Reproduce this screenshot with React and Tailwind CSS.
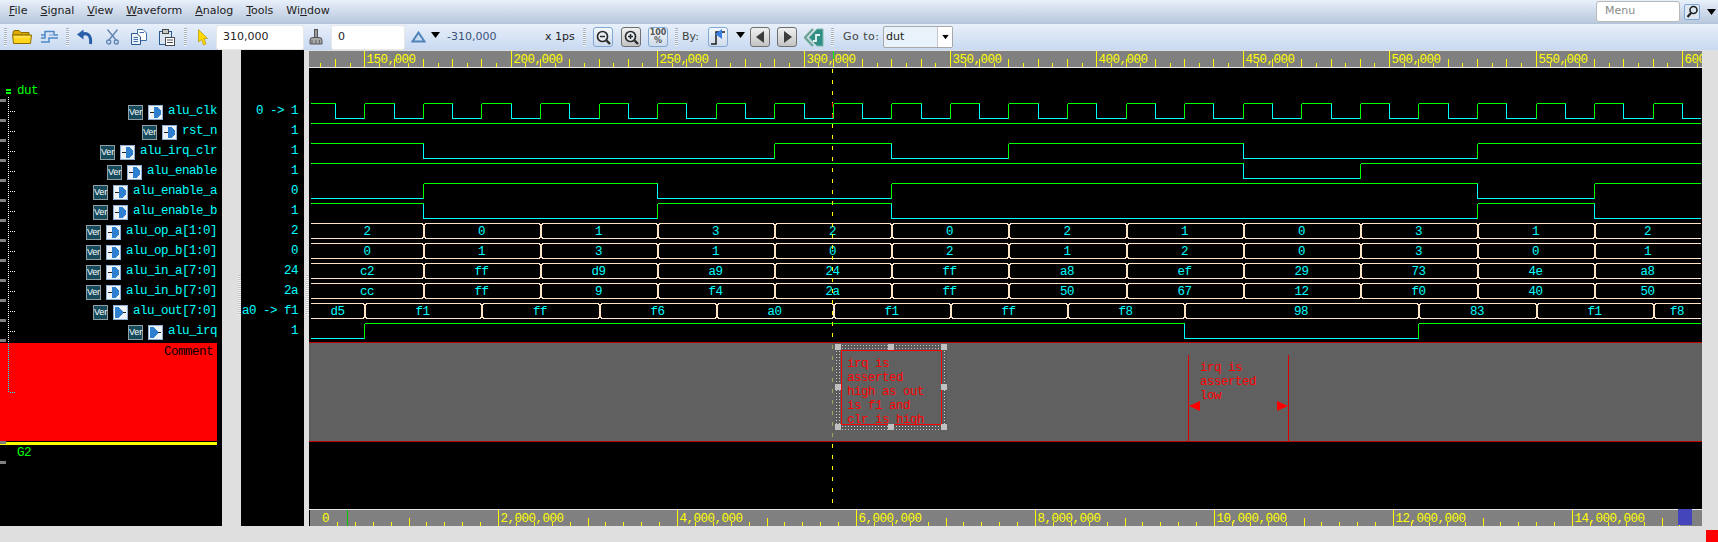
import React from "react";

const X = (t) => Math.round(364.3 + (t - 150000) * 0.002928);
const HI = "#00ff00";
const LO = "#00ffff";
const BUS = "#ffe4c8";

const signals = [
  { name: "alu_clk", value: "0 -> 1" },
  { name: "rst_n", value: "1" },
  { name: "alu_irq_clr", value: "1" },
  { name: "alu_enable", value: "1" },
  { name: "alu_enable_a", value: "0" },
  { name: "alu_enable_b", value: "1" },
  { name: "alu_op_a[1:0]", value: "2" },
  { name: "alu_op_b[1:0]", value: "0" },
  { name: "alu_in_a[7:0]", value: "24" },
  { name: "alu_in_b[7:0]", value: "2a" },
  { name: "alu_out[7:0]", value: "a0 -> f1", out: true },
  { name: "alu_irq", value: "1", out: true },
];

const clkEdges = [];
for (let t = 140000; t <= 600000; t += 10000) clkEdges.push(t);

// first level + times where it toggles
const digital = [
  { row: 0, start: 1, edges: clkEdges },
  { row: 1, start: 1, edges: [] },
  { row: 2, start: 1, edges: [170000, 290000, 330000, 370000, 450000, 530000] },
  { row: 3, start: 1, edges: [450000, 490000] },
  { row: 4, start: 0, edges: [170000, 250000, 330000, 530000, 570000] },
  { row: 5, start: 1, edges: [170000, 250000, 330000, 530000, 570000] },
  { row: 11, start: 0, edges: [150000, 430000, 510000] },
];

const inTimes = [170000, 210000, 250000, 290000, 330000, 370000, 410000, 450000, 490000, 530000, 570000];
const buses = [
  { row: 6, times: inTimes, vals: ["2", "0", "1", "3", "2", "0", "2", "1", "0", "3", "1", "2"] },
  { row: 7, times: inTimes, vals: ["0", "1", "3", "1", "0", "2", "1", "2", "0", "3", "0", "1"] },
  { row: 8, times: inTimes, vals: ["c2", "ff", "d9", "a9", "24", "ff", "a8", "ef", "29", "73", "4e", "a8"] },
  { row: 9, times: inTimes, vals: ["cc", "ff", "9", "f4", "2a", "ff", "50", "67", "12", "f0", "40", "50"] },
  {
    row: 10,
    times: [150000, 190000, 230000, 270000, 310000, 350000, 390000, 430000, 510000, 550000, 590000],
    vals: ["d5", "f1", "ff", "f6", "a0", "f1", "ff", "f8", "98", "83", "f1", "f8"],
  },
];

const LEFT = 311;
const RIGHT = 1701;

function DigitalWave({ row, start, edges }) {
  const hi = 103.5 + row * 20;
  const lo = hi + 15;
  const parts = [];
  let level = start;
  let from = LEFT;
  edges.forEach((t) => {
    const x = X(t) + 0.5;
    parts.push(<path key={t} d={`M${from} ${level ? hi : lo}H${x}`} stroke={level ? HI : LO} />);
    level = level ? 0 : 1;
    parts.push(<path key={t + "v"} d={`M${x} ${hi}V${lo}`} stroke={level ? HI : LO} />);
    from = x;
  });
  parts.push(<path key="end" d={`M${from} ${level ? hi : lo}H${RIGHT}`} stroke={level ? HI : LO} />);
  return <g fill="none">{parts}</g>;
}

function BusWave({ row, times, vals }) {
  const top = 103.5 + row * 20;
  const bot = top + 15;
  const cuts = [LEFT, ...times.map(X), RIGHT];
  return (
    <g>
      {vals.map((v, i) => {
        const a = cuts[i];
        const b = cuts[i + 1];
        const l = i === 0 ? `M${a} ${top}` : `M${a + 2.5} ${top}`;
        const rightEdge = i === vals.length - 1 ? `H${b}M${b} ${bot}` : `H${b - 0.5}L${b + 0.5} ${top + 2}V${bot - 2}L${b - 0.5} ${bot}`;
        const leftEdge = i === 0 ? `H${a}` : `H${a + 2.5}L${a + 1.5} ${bot - 2}V${top + 2}L${a + 2.5} ${top}`;
        return (
          <g key={i}>
            <path d={`${l}${rightEdge}${leftEdge}`} fill="none" stroke={BUS} />
            <text x={(a + b) / 2} y={top + 11} textAnchor="middle" fill={LO}>
              {v}
            </text>
          </g>
        );
      })}
    </g>
  );
}

function TopRuler() {
  const ticks = [];
  for (let t = 135000; t <= 605000; t += 5000) ticks.push(t);
  return (
    <svg width="1393" height="18" viewBox="309 50 1393 18" className="block shrink-0 text-[12.5px] tracking-[-0.5px]" shapeRendering="crispEdges">
      <rect x="309" y="50" width="1393" height="18" fill="#808080" />
      <rect x="309" y="50" width="1393" height="1" fill="#dfdfdf" />
      <rect x="309" y="67" width="1393" height="1" fill="#e6e6e6" />
      {ticks.map((t) => {
        const major = t % 50000 === 0;
        const tall = t % 10000 === 0;
        const x = X(t) + 0.5;
        return (
          <g key={t}>
            <path d={`M${x} ${major ? 51 : tall ? 59 : 63}V67`} stroke="#ffff00" />
            {major && (
              <text x={x + 2} y="63" fill="#ffff00">
                {t.toLocaleString("en-US")}
              </text>
            )}
          </g>
        );
      })}
      <path d={`M${X(310000) + 0.5} 51V59`} stroke="#00ff00" />
    </svg>
  );
}

function BottomRuler() {
  const ticks = [];
  for (let i = 1; i <= 76; i++) ticks.push(i);
  return (
    <svg width="1393" height="17" viewBox="309 509 1393 17" className="block shrink-0 text-[12.5px] tracking-[-0.5px]" shapeRendering="crispEdges">
      <rect x="310" y="510" width="1392" height="16" fill="#808080" />
      <rect x="309" y="509" width="1393" height="1" fill="#e6e6e6" />
      <text x="322" y="522" fill="#ffff00">0</text>
      {ticks.map((i) => {
        const x = Math.round(319 + i * 17.9) + 0.5;
        const major = i % 10 === 0;
        const tall = i % 5 === 0;
        return (
          <g key={i}>
            <path d={`M${x} ${major ? 510 : tall ? 518 : 522}V526`} stroke="#ffff00" />
            {major && (
              <text x={x + 2} y="522" fill="#ffff00">
                {(i * 200000).toLocaleString("en-US")}
              </text>
            )}
          </g>
        );
      })}
      <path d="M347.5 510V526" stroke="#00c800" />
      <rect x="1678" y="509" width="14" height="16" fill="#4444bb" />
    </svg>
  );
}

function Grip({ className = "" }) {
  return <div className={`h-[18px] w-[3px] shrink-0 bg-[repeating-linear-gradient(180deg,#a8b0ba_0px,#a8b0ba_1px,#f4f7fb_1px,#f4f7fb_2px)] ${className}`} />;
}

function Caret({ className = "" }) {
  return (
    <svg width="9" height="6" viewBox="0 0 9 6" className={`shrink-0 ${className}`}>
      <path d="M0 0H9L4.500 6Z" fill="#000" />
    </svg>
  );
}

function Magnifier({ plus }) {
  return (
    <svg width="15" height="15" viewBox="0 0 15 15" fill="none">
      <circle cx="6.500" cy="6.500" r="5" stroke="#2b2b2b" strokeWidth="1.700" fill="#e8eef4" />
      <path d="M10.500 10.500L14 14" stroke="#2b2b2b" strokeWidth="2.400" />
      <path d="M4 6.500H9" stroke="#2b2b2b" strokeWidth="1.500" />
      {plus && <path d="M6.500 4V9" stroke="#2b2b2b" strokeWidth="1.500" />}
    </svg>
  );
}

function IconButton({ children, className = "", blue = true }) {
  return (
    <div
      className={`flex h-[20px] w-[20px] shrink-0 items-center justify-center rounded-[3px] border ${
        blue ? "border-[#7fa8d4] bg-gradient-to-b from-[#f4f8fc] to-[#cfdcea]" : "border-[#6f6f6f] bg-gradient-to-b from-[#f0f0f0] to-[#c4c4c4]"
      } ${className}`}
    >
      {children}
    </div>
  );
}

function VerBadge() {
  return (
    <div className="flex h-[15px] w-[15px] shrink-0 items-center justify-center border border-[#8f9fa3] bg-[#174b5c] font-['Liberation_Sans',sans-serif] text-[9px] tracking-[-0.2px] leading-none text-white">
      Ver
    </div>
  );
}

function GateIcon({ out }) {
  return (
    <svg width="15" height="15" viewBox="0 0 15 15" className="shrink-0" shapeRendering="crispEdges">
      <rect x="0.500" y="0.500" width="14" height="14" fill="#eef3f8" stroke="#8fb0d4" />
      {out ? (
        <>
          <path d="M2 2H5L10 6V9L5 13H2Z" fill="#2f7fd0" />
          <path d="M10 7.500H13" stroke="#222" />
        </>
      ) : (
        <>
          <path d="M6 2H9L13 6V9L9 13H6Z" fill="#2f7fd0" />
          <path d="M2 7.500H6" stroke="#222" />
        </>
      )}
    </svg>
  );
}

function MenuBar() {
  return (
    <div className="flex h-[24px] items-center border-b border-[#b3c4da] bg-gradient-to-b from-[#e8f0fb] to-[#b9c8dc] pl-[9px] text-[11px] text-[#222]">
      <div className="flex gap-[13px]">
        <span><span className="underline">F</span>ile</span>
        <span><span className="underline">S</span>ignal</span>
        <span><span className="underline">V</span>iew</span>
        <span><span className="underline">W</span>aveform</span>
        <span><span className="underline">A</span>nalog</span>
        <span><span className="underline">T</span>ools</span>
        <span>Wi<span className="underline">n</span>dow</span>
      </div>
      <div className="ml-auto flex items-center pr-[2px]">
        <div className="flex h-[21px] w-[84px] items-center rounded-[3px] border border-[#b8b8b8] bg-white pl-[8px] text-[11px] text-[#8a8a8a]">Menu</div>
        <div className="ml-[4px] flex h-[16px] w-[16px] items-center justify-center rounded-[2px] border border-[#7fa8d4] bg-[#dce8f4]">
          <svg width="13" height="13" viewBox="0 0 13 13" fill="none">
            <circle cx="7.500" cy="5" r="3.500" stroke="#222" strokeWidth="1.600" />
            <path d="M5 8L1.500 12" stroke="#222" strokeWidth="2.200" />
          </svg>
        </div>
        <Caret className="ml-[7px]" />
      </div>
    </div>
  );
}

function ToolBar() {
  return (
    <div className="flex h-[26px] items-center whitespace-nowrap bg-gradient-to-b from-[#e8f0fa] to-[#c8d9f1] text-[11px]">
      <Grip className="ml-[4px]" />
      <svg width="20" height="16" viewBox="0 0 20 16" className="ml-[5px] shrink-0">
        <path d="M1 3.500Q1 1.500 3 1.500H7L9 3.500H17V6H1Z" fill="#e0aa00" stroke="#8a6c00" />
        <path d="M0.500 6H19.500L18.500 14.500H1.500Z" fill="#ffd51e" stroke="#8a6c00" />
        <path d="M2 8H18" stroke="#ffec80" />
      </svg>
      <svg width="17" height="14" viewBox="0 0 17 14" fill="none" className="ml-[9px] shrink-0" stroke="#4f88c6">
        <path d="M0 8H4V1.500H13V5H17" strokeWidth="1.500" />
        <path d="M0 5H4M0 12H8V8H13V8H17" strokeWidth="1.500" />
        <path d="M8 5H13" strokeWidth="1.500" stroke="#8fb4da" />
      </svg>
      <Grip className="ml-[8px]" />
      <svg width="16" height="16" viewBox="0 0 16 16" fill="none" className="ml-[8px] shrink-0">
        <path d="M5 5.500C10 3 14.500 6 13.500 15" stroke="#2a5fa8" strokeWidth="3" />
        <path d="M0 5.500L6.500 0.500V10.500Z" fill="#2a5fa8" />
      </svg>
      <svg width="13" height="16" viewBox="0 0 13 16" fill="none" className="ml-[13px] shrink-0" stroke="#5f82b0">
        <path d="M1.500 0.500L10 11M11.500 0.500L3 11" strokeWidth="1.300" />
        <circle cx="2.700" cy="13" r="2" strokeWidth="1.300" />
        <circle cx="10.300" cy="13" r="2" strokeWidth="1.300" />
      </svg>
      <svg width="16" height="16" viewBox="0 0 16 16" className="ml-[12px] shrink-0">
        <path d="M6.500 0.500H12L15.500 4V11.500H6.500Z" fill="#fff" stroke="#3f70a8" />
        <path d="M0.500 4.500H6L9.500 8V15.500H0.500Z" fill="#eaf1f9" stroke="#2a5a94" />
        <path d="M2.500 8.500H7M2.500 10.500H7M2.500 12.500H7M8.500 3.500H13" stroke="#3f70a8" />
      </svg>
      <svg width="16" height="17" viewBox="0 0 16 17" className="ml-[12px] shrink-0">
        <rect x="0.500" y="2.500" width="12" height="13" fill="#dbe6f2" stroke="#2a5a94" />
        <rect x="3.500" y="0.500" width="6" height="4" fill="#c8c8c8" stroke="#444" />
        <rect x="6.500" y="8.500" width="9" height="8" fill="#fff" stroke="#4a4a4a" />
        <path d="M8 11H14M8 13.500H14" stroke="#555" />
      </svg>
      <Grip className="ml-[9px]" />
      <svg width="10" height="17" viewBox="0 0 10 17" className="ml-[11px] shrink-0">
        <path d="M0.500 0.500L9.500 9.500H6L8 15L5.500 16L3.500 10.500L0.500 13Z" fill="#ffd800" stroke="#b89a00" strokeWidth="0.700" />
      </svg>
      <div className="ml-[8px] flex h-[25px] w-[88px] shrink-0 items-center rounded-[3px] border border-[#e8e8e8] bg-white pl-[6px] text-[11px] text-[#222]">310,000</div>
      <svg width="14" height="17" viewBox="0 0 14 17" className="ml-[5px] shrink-0">
        <rect x="5.500" y="0.500" width="3" height="8" fill="#9a9a9a" stroke="#555" />
        <path d="M1 15V11Q1 8.500 4 8.500H10Q13 8.500 13 11V15Z" fill="#a8a8a8" stroke="#555" />
        <path d="M3 11V15M7 11V15M10.500 11V15" stroke="#666" />
      </svg>
      <div className="ml-[8px] flex h-[25px] w-[74px] shrink-0 items-center rounded-[3px] border border-[#e8e8e8] bg-white pl-[6px] text-[11px] text-[#222]">0</div>
      <svg width="15" height="12" viewBox="0 0 15 12" fill="none" className="ml-[6px] shrink-0">
        <path d="M7.500 1.500L13.500 10.500H1.500Z" stroke="#4f82bb" strokeWidth="2" fill="#c9dbee" />
      </svg>
      <Caret className="ml-[5px] -translate-y-[2px]" />
      <span className="ml-[7px] w-[98px] shrink-0 text-[#3a5278]">-310,000</span>
      <span className="w-[32px] shrink-0 text-[#222]">x 1ps</span>
      <Grip className="ml-[6px]" />
      <IconButton className="ml-[7px]"><Magnifier /></IconButton>
      <IconButton className="ml-[8px]" blue={false}><Magnifier plus /></IconButton>
      <IconButton className="ml-[7px] flex-col text-[8px] font-bold leading-[8px] text-[#555]">
        <span>100</span>
        <span>%</span>
      </IconButton>
      <Grip className="ml-[7px]" />
      <span className="ml-[4px] w-[20px] shrink-0 text-[#444]">By:</span>
      <IconButton className="ml-[6px]">
        <svg width="16" height="16" viewBox="0 0 16 16" fill="none">
          <path d="M1 15H6V3H15" stroke="#1c1c1c" strokeWidth="1.500" />
          <path d="M12 1V11L5 6Z" fill="#3b7fe0" transform="translate(0 -1)" />
        </svg>
      </IconButton>
      <Caret className="ml-[8px] -translate-y-[2px]" />
      <IconButton className="ml-[5px]" blue={false}>
        <svg width="9" height="12" viewBox="0 0 9 12"><path d="M8 0V12L0 6Z" fill="#3c3c3c" /></svg>
      </IconButton>
      <IconButton className="ml-[7px]" blue={false}>
        <svg width="9" height="12" viewBox="0 0 9 12"><path d="M1 0V12L9 6Z" fill="#3c3c3c" /></svg>
      </IconButton>
      <svg width="20" height="19" viewBox="0 0 20 19" fill="none" className="ml-[7px] shrink-0">
        <path d="M9 1L1 9.500L9 18" stroke="#6fa596" strokeWidth="2.500" />
        <path d="M13 1L5 9.500L13 18H19V1Z" fill="#2f8f86" stroke="#7fb8a8" />
        <path d="M9 13H12V7H16" stroke="#e6f4f0" strokeWidth="1.800" />
      </svg>
      <Grip className="ml-[7px]" />
      <span className="ml-[9px] w-[34px] shrink-0 tracking-[0.5px] text-[#444]">Go to:</span>
      <div className="ml-[6px] flex h-[22px] w-[70px] shrink-0 items-center rounded-[2px] border border-[#a8a8a8] bg-[#e9f1fa] pl-[2px] text-[11px] text-[#222]">
        dut
        <div className="ml-auto flex h-full w-[15px] items-center justify-center border-l border-[#c8c8c8] bg-white">
          <Caret className="scale-75" />
        </div>
      </div>
    </div>
  );
}

function GripTick({ className = "" }) {
  return <div className={`absolute left-0 h-[3px] w-[6px] bg-[#808080] ${className}`} />;
}

function TreeLines() {
  return (
    <svg width="16" height="345" viewBox="0 50 16 345" className="absolute left-0 top-0" fill="none" shapeRendering="crispEdges">
      <path d="M8.500 97V343" stroke="#fff" strokeDasharray="1 1" />
      <path d="M8.500 343V393" stroke="#00ffff" strokeDasharray="1 1" />
      {signals.map((s, i) => (
        <path key={s.name} d={`M10 ${111.5 + i * 20}H15`} stroke="#fff" strokeDasharray="1 1" />
      ))}
      <path d="M10 392.500H15" stroke="#00ffff" strokeDasharray="1 1" />
    </svg>
  );
}

function SignalPane() {
  return (
    <div className="relative w-[222px] shrink-0 bg-black pr-[5px] pt-[32px]">
      <div className="relative flex h-[20px] items-center pb-[2px] pl-[6px] text-[#00ff00]">
        <div className="mr-[6px] h-[5px] w-[5px] border-y-2 border-[#00ff00]" />
        dut
        <GripTick className="bottom-0" />
      </div>
      {signals.map((s) => (
        <div key={s.name} className="relative flex h-[20px] items-center justify-end gap-[5px] text-[#00ffff]">
          <VerBadge />
          <GateIcon out={s.out} />
          <span className="-translate-y-[1px]">{s.name}</span>
          <GripTick className="bottom-0" />
        </div>
      ))}
      <div className="mt-[1px] h-[98px] bg-[#ff0000] pr-[4px] pt-[1px] text-right leading-[16px] text-black">Comment</div>
      <div className="relative mt-[1px] h-[3px] bg-[#ffff00]">
        <GripTick className="-top-[1px] bg-[#7a86b4]" />
      </div>
      <div className="relative flex h-[16px] items-center pl-[17px] text-[#00ff00]">
        G2
        <GripTick className="-bottom-[3px]" />
      </div>
      <TreeLines />
    </div>
  );
}

function ValuePane() {
  return (
    <div className="w-[63px] shrink-0 whitespace-pre bg-black pr-[6px] pt-[52px] text-right text-[#00ffff]">
      {signals.map((s) => (
        <div key={s.name} className="flex h-[20px] items-center justify-end pb-[2px]">{s.value}</div>
      ))}
    </div>
  );
}

function Handle() {
  return <div className="mt-[225px] h-[40px] w-[3px] bg-[repeating-linear-gradient(180deg,#c4c4c4_0px,#c4c4c4_1px,#f2f2f2_1px,#f2f2f2_2px)]" />;
}

function CommentPanel() {
  return (
    <div className="relative h-[100px] shrink-0 overflow-hidden border-y border-[#c00000] bg-[#606060] leading-[14px] text-[#ff0000]">
      {/* selected note: dotted frame, grab handles, red box */}
      <div className="absolute left-[526px] top-[1px] h-[86px] w-[112px] bg-[radial-gradient(#c8c8c8_0.7px,#5a5a5a_1px)] bg-[length:3px_3px]" />
      <div className="absolute left-[532px] top-[7px] h-[75px] w-[101px] overflow-hidden border border-[#ff0000] bg-[#606060] pl-[5px] pt-[6px]">
        irq is<br />asserted<br />high as out<br />is f1 and<br />clr is high
      </div>
      <div className="absolute left-[526px] top-[1px] h-[6px] w-[6px] bg-[#c0c0c0]" />
      <div className="absolute left-[579px] top-[1px] h-[6px] w-[6px] bg-[#c0c0c0]" />
      <div className="absolute left-[632px] top-[1px] h-[6px] w-[6px] bg-[#c0c0c0]" />
      <div className="absolute left-[526px] top-[41px] h-[6px] w-[6px] bg-[#c0c0c0]" />
      <div className="absolute left-[632px] top-[41px] h-[6px] w-[6px] bg-[#c0c0c0]" />
      <div className="absolute left-[526px] top-[81px] h-[6px] w-[6px] bg-[#c0c0c0]" />
      <div className="absolute left-[579px] top-[81px] h-[6px] w-[6px] bg-[#c0c0c0]" />
      <div className="absolute left-[632px] top-[81px] h-[6px] w-[6px] bg-[#c0c0c0]" />
      {/* width-style note */}
      <div className="absolute left-[879px] top-[12px] h-[86px] w-[101px] border-x border-[#d80000] pl-[11px] pt-[6px]">
        irq is<br />asserted<br />low
      </div>
      <svg width="101" height="10" viewBox="0 0 101 10" className="absolute left-[880px] top-[58px]">
        <path d="M0 5L11 0V10Z" fill="#ff0000" />
        <path d="M99 5L88 0V10Z" fill="#ff0000" />
      </svg>
    </div>
  );
}

function Cursor() {
  return (
    <svg width="1" height="452" viewBox="0 68 1 452" className="absolute left-[523px] top-[18px]" shapeRendering="crispEdges">
      <path d="M0.500 69V342" stroke="#ffff00" strokeDasharray="4 7" />
      <path d="M0.500 345V441" stroke="#a0a060" strokeDasharray="4 7" />
      <path d="M0.500 444V503" stroke="#ffff00" strokeDasharray="4 7" />
      {/* xor of the dashes against the clock edge */}
      <path d="M0.500 103V107M0.500 114V118" stroke="#ff0000" />
    </svg>
  );
}

function WavePane() {
  return (
    <div className="relative flex w-[1393px] shrink-0 flex-col bg-black">
      <TopRuler />
      <svg width="1393" height="274" viewBox="309 68 1393 274" className="block shrink-0" shapeRendering="crispEdges">
        {digital.map((d) => (
          <DigitalWave key={d.row} {...d} />
        ))}
        {buses.map((b) => (
          <BusWave key={b.row} {...b} />
        ))}
      </svg>
      <CommentPanel />
      <div className="h-[67px] shrink-0 bg-black" />
      <BottomRuler />
      <Cursor />
    </div>
  );
}

export default function App() {
  return (
    <div className="flex h-[542px] w-[1718px] flex-col overflow-hidden bg-[#dfdfdf] font-['DejaVu_Sans',sans-serif]">
      <MenuBar />
      <ToolBar />
      <div className="flex h-[476px] shrink-0 font-['Liberation_Mono',monospace] text-[12.5px] tracking-[-0.5px]">
        <SignalPane />
        <div className="flex w-[19px] shrink-0 justify-end">
          <Handle />
        </div>
        <ValuePane />
        <div className="flex w-[5px] shrink-0 justify-end">
          <Handle />
        </div>
        <WavePane />
      </div>
      <div className="flex h-[16px] shrink-0 items-end justify-end">
        <div className="h-[12px] w-[12px] bg-[#ff0000]" />
      </div>
    </div>
  );
}
